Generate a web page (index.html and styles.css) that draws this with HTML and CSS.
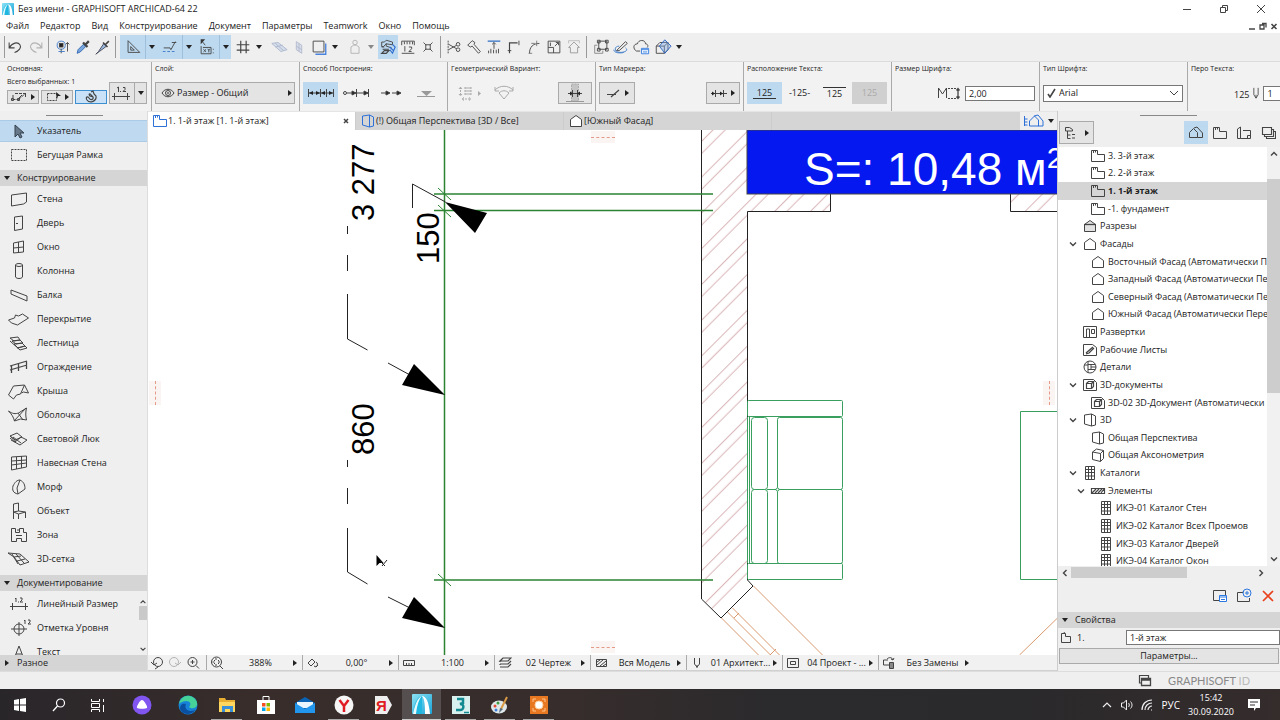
FILE: index.html
```html
<!DOCTYPE html>
<html lang="ru">
<head>
<meta charset="utf-8">
<title>Без имени - GRAPHISOFT ARCHICAD-64 22</title>
<link rel="stylesheet" href="styles.css">
</head>
<body>
<svg class="sprite" aria-hidden="true">
  <linearGradient id="logoFill" x1="0" y1="0" x2="1" y2="1"><stop offset="0" stop-color="#8be4f5"/><stop offset="1" stop-color="#1aa3d8"/></linearGradient>
  <symbol id="logo" viewBox="0 0 20 20"><rect width="20" height="20" rx="1" fill="url(#logoFill)" stroke="none"/><path d="M1 20C2 10 5 3 10 2v18z" fill="#20b8e0" stroke="none"/><path d="M10 2c3 3 3 12 3 18h5C17 8 14 2 10 2z" fill="#fff" stroke="none"/><path d="M10 2c-5 2-7 9-9 18h3c1-9 3-15 6-18z" fill="#e8fbff" stroke="none"/></symbol>
  <symbol id="down" viewBox="0 0 8 8"><path d="M1 2h6L4 6z" fill="currentColor" stroke="none"/></symbol>
  <symbol id="right" viewBox="0 0 8 8"><path d="M2 1v6l4-3z" fill="currentColor" stroke="none"/></symbol>
  <symbol id="chev" viewBox="0 0 10 10"><path d="M2 3.5l3 3 3-3" stroke-width="1.4"/></symbol>
  <symbol id="plan" viewBox="0 0 16 14"><path d="M1.500 1.500h6v4h7v7h-13zM3.500 1.500v2.500M5.500 1.500v2"/></symbol>
  <symbol id="house" viewBox="0 0 16 14"><path d="M2.500 12.500v-7l5.500-4 5.500 4v7z"/></symbol>
  <symbol id="section" viewBox="0 0 16 14"><path d="M2.500 12.500v-7l5.500-4 5.500 4v7z" fill="#e2e2e2"/><path d="M2 5.500h12" stroke-width="1.300"/></symbol>
  <symbol id="interior" viewBox="0 0 16 14"><path d="M1.500 1.500h13v11h-13zM4.500 12v-8h3v8M9.500 4.500h3v4h-3z"/></symbol>
  <symbol id="sheet" viewBox="0 0 16 14"><path d="M1.500 1.500h9l4 3v8h-13z"/><path d="M4 10l7-6M4 11l3-1 5-5" stroke-width="1.300"/></symbol>
  <symbol id="detail" viewBox="0 0 16 14"><circle cx="8" cy="7" r="6"/><path d="M6 1v12M6 4.500h7M6 9.500h7M9 4.500v5M9 7h5M2 5h4"/></symbol>
  <symbol id="doc3d" viewBox="0 0 16 14"><path d="M1.500 1.500h10l3 3v8h-13z"/><path d="M4.500 5.500h5v5h-5zM4.500 5.500l2-2h5l-2 2M11.500 3.500v5l-2 2" stroke-width="1.200"/></symbol>
  <symbol id="persp" viewBox="0 0 16 14"><path d="M2.500 2l7-1v12l-7-2zM9.500 1l4 2v9l-4 1"/></symbol>
  <symbol id="axon" viewBox="0 0 16 14"><path d="M2.500 4l8 1.500v8l-8-2zM2.500 4l4-3 7 1.500-3 3M13.500 2.500v8l-3 3"/></symbol>
  <symbol id="grid" viewBox="0 0 16 14"><path d="M3.500 .500h9v13h-9zM6.500 .500v13M9.500 .500v13M3.500 3.500h9M3.500 6.500h9M3.500 10h9"/></symbol>
  <symbol id="hatch" viewBox="0 0 16 14"><path d="M1.500 4.500h13v5h-13zM2 9l4-4M5 9l4-4M8 9l4-4M11 9l3-4" stroke-width="1.200"/></symbol>
</svg>

<header class="titlebar">
  <svg class="i12"><use href="#logo"/></svg>
  <h1>Без имени - GRAPHISOFT ARCHICAD-64 22</h1>
  <div class="winbtns">
    <button aria-label="Свернуть"><svg class="i12" viewBox="0 0 12 12"><path d="M2 6.500h8"/></svg></button>
    <button aria-label="Восстановить"><svg class="i12" viewBox="0 0 12 12"><path d="M2.500 4.500h5v5h-5zM4.500 4v-1.500h5v5H8"/></svg></button>
    <button aria-label="Закрыть"><svg class="i12" viewBox="0 0 12 12"><path d="M2 2l8 8M10 2l-8 8"/></svg></button>
  </div>
</header>
<nav class="menubar">
  <button>Файл</button><button>Редактор</button><button>Вид</button><button>Конструирование</button><button>Документ</button><button>Параметры</button><button>Teamwork</button><button>Окно</button><button>Помощь</button>
  <div class="docbtns">
    <button aria-label="Свернуть документ"><svg class="i10" viewBox="0 0 10 10"><path d="M2 8h6" stroke-width="1.500"/></svg></button>
    <button aria-label="Восстановить документ"><svg class="i10" viewBox="0 0 10 10"><path d="M2 4h4v4H2zM4 2.500h4v4" stroke-width="1.300"/></svg></button>
    <button aria-label="Закрыть документ"><svg class="i10" viewBox="0 0 10 10"><path d="M2.500 3l5 5M7.500 3l-5 5" stroke-width="1.600"/></svg></button>
  </div>
</nav>

<div class="toolbar">
  <div class="tgroup first">
    <button class="t" aria-label="Отменить"><svg viewBox="0 0 20 20"><path d="M3.500 5v6h6M3.500 11C7 5 13 4 15.500 7.500c2 3-1 7-6 8.500" stroke-width="1.200"/></svg></button>
    <button class="t faint" aria-label="Повторить"><svg viewBox="0 0 20 20"><path d="M16.500 5v6h-6M16.500 11C13 5 7 4 4.500 7.500c-2 3 1 7 6 8.500" stroke-width="1.200"/></svg></button>
  </div>
  <div class="tgroup g2">
    <button class="t" aria-label="Найти и выбрать"><svg viewBox="0 0 20 20"><circle cx="8" cy="8" r="4.500" stroke="#3b78c8"/><rect x="6" y="6" width="4" height="4" fill="#222"/><path d="M8 12v5M15 5v10M13 7l2-2 2 2"/><path d="M5 15h7" stroke="#3b78c8"/></svg></button>
    <button class="t" aria-label="Взять параметры"><svg viewBox="0 0 20 20"><path d="M3.500 17l1-4 6-6 2.500 2.500-6 6z" fill="#79a7de" stroke="#2d64b0"/><path d="M10 5l5 5M12.500 7.500l4-4" stroke-width="2.500"/></svg></button>
    <button class="t" aria-label="Передать параметры"><svg viewBox="0 0 20 20"><path d="M2 18l3-3 6-9 3 3-8 6z" fill="#9abbe4" stroke="#445"/><path d="M10 5l5 5M12.500 7.500l4-4" stroke-width="1.800"/></svg></button>
  </div>
  <div class="tgroup g3">
    <button class="on w25" aria-label="Направляющие"><svg viewBox="0 0 20 20"><path d="M4.500 3v13h13zM7.500 9.500v4h4z"/></svg></button><button class="on w12" aria-label="Меню направляющих"><svg class="i8"><use href="#down"/></svg></button>
    <button class="on w25" aria-label="Привязка"><svg viewBox="0 0 20 20"><path d="M3 11h7l1 2 5-9M12 5h5" /><path d="M2 15h15" stroke="#3b78c8" stroke-dasharray="3 2"/></svg></button><button class="on w12" aria-label="Меню привязки"><svg class="i8"><use href="#down"/></svg></button>
    <button class="on w25" aria-label="Координаты"><svg viewBox="0 0 20 20"><path d="M3 1.500h5L3 7z" fill="#333" stroke="none"/><path d="M4 3l4 5M3.500 9v8.500h11v-7h-9M17 12v1M17 16v1M6 12.500l3 3M9 12.500l-3 3M11 12l1 2v2M13 12l-1 2"/></svg></button><button class="on w12" aria-label="Меню координат"><svg class="i8"><use href="#down"/></svg></button>
  </div>
  <div class="tgroup g4">
    <button class="t" aria-label="Сетка"><svg viewBox="0 0 20 20"><path d="M3 7.500h14M3 13.500h14M7.500 3v14M13.500 3v14" stroke-width="1.300"/></svg></button><button class="w12" aria-label="Меню сетки"><svg class="i8"><use href="#down"/></svg></button>
    <button class="t faint dim2" aria-label="Плоскость"><svg viewBox="0 0 20 20"><path d="M2 6l7-1 10 8-7 2zM6 10l8-2M6 6l9 8" fill="#c5d2e8" stroke="#7f93b8"/></svg></button>
    <button class="t faint dim2" aria-label="Вертикальная плоскость"><svg viewBox="0 0 20 20"><path d="M7 4l6 4v9l-6-4zM10 6v9M7 9l6 4" fill="#c9d2e6" stroke="#8a99ba"/></svg></button>
    <button class="t" aria-label="Слои"><svg viewBox="0 0 20 20"><path d="M17.500 6v12H6" stroke="#4a84e0" stroke-width="1.500"/><path d="M3.500 3.500h12v12h-12z"/></svg></button><button class="w12" aria-label="Меню слоёв"><svg class="i8"><use href="#down"/></svg></button>
    <button class="t faint" aria-label="Гравитация"><svg viewBox="0 0 20 20"><circle cx="10" cy="5" r="2.500"/><path d="M5.500 17v-7l3-2h3l3 2v7z"/></svg></button><button class="w12 grey" aria-label="Меню гравитации"><svg class="i8"><use href="#down"/></svg></button>
    <button class="t on" aria-label="Группы"><svg viewBox="0 0 20 20"><path d="M3 4.500h3l2-2 7 2v3l-7-1-3 3H3zM8 6v3l6 2M3 10h3"/><path d="M15 7l3 3-3 7-3-4M12 10l4 4" stroke="#2a6bd0" stroke-width="1.200"/><path d="M3 17l3-3h5l-3 3zM4 12.500h7" stroke-width="1.300"/></svg></button>
    <button class="t" aria-label="Измерить"><svg viewBox="0 0 20 20"><path d="M3 8V3.500h14V8M6 4v3M9 4v3M12 4v3M15 4v3M3 17h14M6.500 9v6M11 10h3v2l-3 3h3"/></svg></button>
    <button class="t" aria-label="Пересечение"><svg viewBox="0 0 20 20"><path d="M5 5l3 3M15 5l-3 3M5 15l3-3M15 15l-3-3M7.500 7.500h5v5h-5z"/></svg></button>
  </div>
  <div class="tgroup g5">
    <button class="t" aria-label="Разрезать"><svg viewBox="0 0 20 20"><path d="M3.500 3v14" stroke-dasharray="2 1"/><path d="M4 7l9 5M4 13l9-5"/><circle cx="14.500" cy="7" r="2"/><circle cx="14.500" cy="13" r="2"/></svg></button>
    <button class="t" aria-label="Подрезать"><svg viewBox="0 0 20 20"><path d="M3 8l5-5 3 2-1 2 7 8-2 2-7-8-2 1z"/></svg></button>
    <button class="t" aria-label="Подогнать"><svg viewBox="0 0 20 20"><path d="M3 3.500h14" stroke="#3b78c8" stroke-width="1.500"/><path d="M10 5v7M8 7l2-2 2 2M6.500 12v5M9.500 13v4M12.500 13v4M15 12v5M4 14v3"/></svg></button>
    <button class="t" aria-label="Угол"><svg viewBox="0 0 20 20"><path d="M5 17V5.500h9" stroke-width="1.300"/><path d="M3 14h4M15.500 3v5"/></svg></button>
    <button class="t" aria-label="Сопряжение"><svg viewBox="0 0 20 20"><path d="M5 17C5 10 9 6 16 6"/><path d="M4 17h4M13 3v6M7 6h4" stroke="#777"/></svg></button>
    <button class="t" aria-label="Изменить размер"><svg viewBox="0 0 20 20"><path d="M3.500 3.500h13v13h-13zM3.500 10.500h6v6M11 9l4-4M12 5h3v3M6 9V5"/></svg></button>
    <button class="t" aria-label="Крыша"><svg viewBox="0 0 20 20"><path d="M4 10.500l6-6 6 6h-2v6H6v-6z" stroke="#999"/><path d="M4 6V3h12v3" stroke="#bbb"/></svg></button>
  </div>
  <div class="tgroup g6">
    <button class="t" aria-label="Группировать"><svg viewBox="0 0 20 20"><path d="M7.500 3.500h9v9h-9zM6 2.500h3v3H6zM15 2.500h3v3h-3zM6 11.500h3v3H6zM15 11.500h3v3h-3z"/><path d="M3 8v9h9v-3M3 8h3" stroke="#888"/></svg></button>
    <button class="t" aria-label="Редактировать"><svg viewBox="0 0 20 20"><path d="M5 14l10-10 2 2-9 8z"/><path d="M8 9C2 9 2 16 9 16s9-3 6-5M2 13c0 4 8 4 11 3" stroke="#3b78c8"/></svg></button>
    <button class="t" aria-label="Параметры элемента"><svg viewBox="0 0 20 20"><path d="M9 14.500H5c-4-2-4-8 1-8 1-5 9-5 9 0 3 0 3 3 2 4"/><path d="M10.500 11.500h8v6h-8zM11 13h7M12 15.500h5" stroke="#2d78e0" fill="#fff"/></svg></button>
    <button class="t cube" aria-label="3D-вид"><svg viewBox="0 0 20 20"><path d="M2.500 9l4-4h9v8l-4 4h-9zM2.500 9h9v8M11.500 9l4-4"/><path d="M12 2l7 7-7 8-6-8z" fill="#7aa7e8" fill-opacity=".4" stroke="#2d64c0"/></svg></button><button class="w12" aria-label="Меню 3D"><svg class="i8"><use href="#down"/></svg></button>
  </div>
</div>

<div class="infobox">
  <section class="sec s1">
    <p class="lbl">Основная:</p>
    <div class="row">
      <div class="col">
        <p class="lbl">Всего выбранных: 1</p>
        <div class="trio">
          <button class="btn" aria-label="Выбор"><svg class="i20" viewBox="0 0 20 14"><path d="M6 3.500h11M3.500 9.500h6M9.500 9.500l7-6M4 5v4M16.500 4v3" stroke-dasharray="3 1"/><path d="M2.500 8.500h2v2h-2zM8.500 8.500h2v2h-2zM13 5l-3 3"/></svg><svg class="i8"><use href="#right"/></svg></button>
          <button class="btn" aria-label="Рамка"><svg class="i20" viewBox="0 0 20 14"><path d="M4.500 3.500h9v7h-9z" stroke-dasharray="2 1"/><path d="M13 2l5 4-3 0-1 3z" fill="#222" stroke="none"/></svg><svg class="i8"><use href="#right"/></svg></button>
          <button class="btn act" aria-label="Магнит"><svg class="i14" viewBox="0 0 14 14"><path d="M7 2l2-1 1 3 2 2c1 5-6 8-9 4-2-3 1-4 2-2 2 3 5 1 4-1L6 6c-2-2 0-3 1-1l2 2" stroke-width="1.200"/></svg></button>
        </div>
      </div>
      <button class="btn dim" aria-label="Линейный размер"><svg class="i20" viewBox="0 0 20 20"><path d="M1 13.500h18M3.500 10v7M16.500 10v7M6 5l1.500-1v5M9 8.500h1M12 4.500h2v2l-2 2h3"/></svg><span class="ddl"><svg class="i8"><use href="#down"/></svg></span></button>
    </div>
  </section>
  <section class="sec">
    <p class="lbl">Слой:</p>
    <div class="row"><button class="btn layer"><svg class="i14" viewBox="0 0 14 14"><path d="M1 7c3-5 9-5 12 0-3 5-9 5-12 0z"/><circle cx="7" cy="7" r="2.500"/><circle cx="7" cy="7" r=".500"/></svg><span>Размер - Общий</span><svg class="i8"><use href="#right"/></svg></button></div>
  </section>
  <section class="sec">
    <p class="lbl">Способ Построения:</p>
    <div class="row">
      <button class="opt on" aria-label="Цепочка"><svg class="i28" viewBox="0 0 28 20"><path d="M1.500 6v8M26.500 6v8M13.500 6v8M19.500 6v8M2 10h24"/><path d="M2 10l4-2v4zM13 10l-4-2v4zM14 10l4-2v4zM26 10l-4-2v4z" fill="#222" stroke="none"/></svg></button>
      <button class="opt" aria-label="От базы"><svg class="i28" viewBox="0 0 28 20"><circle cx="3" cy="10" r="1.500"/><path d="M5 10h21M14.500 6v8M26.500 6v8"/><path d="M14 10l-4-2v4zM26 10l-4-2v4z" fill="#222"/></svg></button>
      <button class="opt" aria-label="Базовые отметки"><svg class="i28" viewBox="0 0 28 20"><path d="M4 10h8M15 10h8"/><path d="M13 10l-4-2v4zM24 10l-4-2v4z" fill="#222"/></svg></button>
      <button class="opt" aria-label="Высота"><svg class="i28" viewBox="0 0 28 20"><path d="M5 13.500h18" stroke="#999"/><path d="M9 8h11l-5.500 5z" fill="#999" stroke="none"/></svg></button>
    </div>
  </section>
  <section class="sec">
    <p class="lbl">Геометрический Вариант:</p>
    <div class="row spread">
      <button class="opt" aria-label="Направление"><svg class="i28" viewBox="0 0 28 20"><path d="M5.500 4v9M4 6l1.500-2L7 6M4 11l1.500 2L7 11M7 16h9M9 14.500L7 16l2 1.500M14 14.500l2 1.500-2 1.500M9 5h8M9 8h8M9 11h8M11 4v9M15 4v9" stroke="#aaa" stroke-dasharray="2 1"/><path d="M23 8v5l3-2.500z" fill="#aaa" stroke="none"/></svg></button>
      <button class="opt" aria-label="Угловой"><svg class="i20" viewBox="0 0 20 20"><path d="M1 7c5-5 13-5 18 0M5 10c3-3 7-3 10 0l-5 6zM1 4v4h4M19 4v4h-4" stroke="#aaa"/></svg></button>
      <button class="btn push" aria-label="Статический размер"><svg class="i20" viewBox="0 0 20 20"><path d="M6.500 1h7v17h-7z" fill="#c4c4c4" stroke="#aaa" stroke-dasharray="2 1"/><path d="M3 10.500h14M7.500 7v7M12.500 7v7"/><path d="M1 18.500h18" stroke="#999"/><path d="M5 8.500l3 2-3 2zM15 8.500l-3 2 3 2z" fill="#222" stroke="none"/></svg></button>
    </div>
  </section>
  <section class="sec">
    <p class="lbl">Тип Маркера:</p>
    <div class="row spread">
      <button class="btn" aria-label="Маркер"><svg class="i20" viewBox="0 0 20 20"><path d="M4 11.500h9M8 14l8-7" stroke-width="1.200"/></svg><svg class="i8"><use href="#right"/></svg></button>
      <button class="btn push" aria-label="Линия"><svg class="i20" viewBox="0 0 20 20"><path d="M2 10.500h16M6.500 7v7M14.500 7v7"/><path d="M6 10.500l-3-2v4zM14 10.500l-3-2v4z" fill="#222" stroke="none"/></svg><svg class="i8"><use href="#right"/></svg></button>
    </div>
  </section>
  <section class="sec">
    <p class="lbl">Расположение Текста:</p>
    <div class="row num"><button class="opt on"><span class="over">125</span></button><button class="opt">-125-</button><button class="opt"><span class="under">125</span></button><button class="opt dis" disabled>125</button></div>
  </section>
  <section class="sec">
    <p class="lbl">Размер Шрифта:</p>
    <div class="row size"><svg class="i24" viewBox="0 0 24 20"><path d="M1.500 15V5l4 6 4-6v10"/><path d="M11 5.500h8M11 15.500h8" stroke-dasharray="2 1"/><path d="M21 6v9M19.500 7.500L21 5.500l1.500 2M19.500 13.500l1.500 2 1.500-2" stroke-width="1.300"/></svg><input class="field" type="text" value="2,00" aria-label="Размер шрифта"></div>
  </section>
  <section class="sec">
    <p class="lbl">Тип Шрифта:</p>
    <div class="row"><div class="selwrap"><svg class="i10" viewBox="0 0 10 10"><path d="M1 6l2 3 5-8" stroke-width="1.600"/></svg><select aria-label="Тип шрифта"><option>Arial</option></select><svg class="i10 thinchev" viewBox="0 0 10 10"><path d="M1 3l4 4 4-4"/></svg></div></div>
  </section>
  <section class="sec last">
    <p class="lbl">Перо Текста:</p>
    <div class="row pen"><span class="pennum">125</span><svg class="i12" viewBox="0 0 12 14"><path d="M3.500 1v8l2.500 4 2.500-4V1M6 9v4"/></svg><input class="field" type="text" value="1" aria-label="Перо текста"></div>
  </section>
</div>

<main class="work">
  <aside class="toolbox">
    <div class="grip"></div>
    <button class="tool sel"><svg viewBox="0 0 24 20"><path d="M8 4v12l3-3 2 4 2-1-2-4h4z" fill="#66788a" stroke="#35404c"/></svg>Указатель</button>
    <button class="tool gap"><svg viewBox="0 0 24 20"><path d="M4.500 4.500h15v11h-15z" stroke-dasharray="2 1"/></svg>Бегущая Рамка</button>
    <button class="head"><svg class="i8"><use href="#down"/></svg>Конструирование</button>
    <div class="tools">
      <button class="tool"><svg viewBox="0 0 24 20"><path d="M4.500 6l15-2v9l-3 2-12 2z"/></svg>Стена</button>
      <button class="tool"><svg viewBox="0 0 24 20"><path d="M7.500 4l8-1v13l-8 1.500zM9 10.500h2"/></svg>Дверь</button>
      <button class="tool"><svg viewBox="0 0 24 20"><path d="M6.500 6l10-2v11l-10 1zM11.500 5v11M6.500 11l10-1"/></svg>Окно</button>
      <button class="tool"><svg viewBox="0 0 24 20"><ellipse cx="12" cy="4" rx="3.500" ry="1.500"/><path d="M8.500 4v12c1 2 6 2 7 0V4"/></svg>Колонна</button>
      <button class="tool"><svg viewBox="0 0 24 20"><path d="M4 5l16 6v5L4 9z"/></svg>Балка</button>
      <button class="tool"><svg viewBox="0 0 24 20"><path d="M1.500 11l6-2 1-3 3 1 4-2 6 4-11 7-6-2z"/></svg>Перекрытие</button>
      <button class="tool"><svg viewBox="0 0 24 20"><path d="M3 5l8-1 2 3-6 1zM5 8l8-1 3 3-7 1zM7 11l8-1 3 3-7 2zM10 15l8-2 2 2-7 2-10-9"/></svg>Лестница</button>
      <button class="tool"><svg viewBox="0 0 24 20"><path d="M3 9l17-5M3 13l17-5M4.500 9v7M11.500 7v7M19.500 4v8" stroke-width="1.300"/></svg>Ограждение</button>
      <button class="tool"><svg viewBox="0 0 24 20"><path d="M1.500 14l5-9 11-1-4 9-4 1-3 4zM17.500 4l4 8-5-1-2 1"/></svg>Крыша</button>
      <button class="tool"><svg viewBox="0 0 24 20"><path d="M1.500 6c4 3 7 3 10 2l8-5c-1 4-1 8 0 12l-6-1-6 2c-1-4-3-7-6-10zM19 3l-12 13M11 8l5 7"/></svg>Оболочка</button>
      <button class="tool"><svg viewBox="0 0 24 20"><path d="M3 7l7-3 5 4-7 3zM3 7l5 4v2l-5-4M8 13l6-5 6 3-7 5-9-5M6 8l8 6"/></svg>Световой Люк</button>
      <button class="tool"><svg viewBox="0 0 24 20"><path d="M4.500 4l15-1v11l-15 3zM9.500 4v12M14.500 3v12M4.500 8l15-1M4.500 12l15-2"/></svg>Навесная Стена</button>
      <button class="tool"><svg viewBox="0 0 24 20"><path d="M11 17c-5-1-6-4-5-8 2-4 4-6 7-6l-3 8zM13 3c4 2 5 5 5 9l-7 5"/></svg>Морф</button>
      <button class="tool"><svg viewBox="0 0 24 20"><path d="M6.500 3l5-1v8l-5 1zM6.500 11l5 2 7-2-7-1M6.500 11v7M11.500 13v5M18.500 11v6"/></svg>Объект</button>
      <button class="tool"><svg viewBox="0 0 24 20"><path d="M4.500 3.500h4v4h4v-4h4v4h3v9h-5v-3h-5v3h-5zM9 10.500h6M10 5h2"/></svg>Зона</button>
      <button class="tool"><svg viewBox="0 0 24 20"><path d="M1 4l12 1 9 8-9 3-6-8zM5 5l6 10M9 5l8 9M7 8l7-1M10 12l8-2"/></svg>3D-сетка</button>
    </div>
    <button class="head"><svg class="i8"><use href="#down"/></svg>Документирование</button>
    <div class="docs">
      <div class="doclist">
        <button class="tool"><svg viewBox="0 0 24 20"><path d="M3 12.500h18M5.500 9v7M18.500 9v7M8 5l1-1v4M11 8h1M13 4h2v2l-2 2h3"/></svg>Линейный Размер</button>
        <button class="tool"><svg viewBox="0 0 24 20"><circle cx="12" cy="11" r="5"/><path d="M4 11h16M12 4v14M17 3l1-1v4M21 2h2v2l-2 2h3"/></svg>Отметка Уровня</button>
        <button class="tool"><svg viewBox="0 0 24 20"><path d="M7 17l5-13 5 13M9 12h6"/></svg>Текст</button>
      </div>
      <div class="vbar"><svg class="i8 up"><use href="#chev"/></svg><i></i><svg class="i8"><use href="#chev"/></svg></div>
    </div>
    <button class="head"><svg class="i8"><use href="#right"/></svg>Разное</button>
  </aside>

  <section class="center">
    <div class="tabs">
      <button class="tab cur"><svg class="i16 blue"><use href="#plan"/></svg>1. 1-й этаж [1. 1-й этаж]<svg class="i10 x" viewBox="0 0 10 10"><path d="M3 3l4 4M7 3l-4 4" stroke-width="1.500"/></svg></button>
      <button class="tab"><svg class="i16 blue"><use href="#persp"/></svg>(!) Общая Перспектива [3D / Все]</button>
      <button class="tab"><svg class="i16 white"><use href="#house"/></svg>[Южный Фасад]</button>
      <button class="navbtn" aria-label="Навигатор"><svg class="i24 blue" viewBox="0 0 24 14"><path d="M2.500 2v10M2.500 5h3M2.500 8h3M2.500 11h3M7.500 12V7l5-5 4 4v6zM12 2l4-1 5 6v5h-5"/></svg><svg class="i8"><use href="#down"/></svg></button>
    </div>
    <div class="canvas">
      <svg class="drawing">
        <defs><pattern id="brick" width="25.3" height="10" patternUnits="userSpaceOnUse" patternTransform="rotate(45)"><path d="M14.200 0v10M22.700 0v10" stroke="#cfa0a4" stroke-width=".8"/></pattern></defs>
        <g transform="translate(-148 -130)">
          <path d="M702 130h45v64h84v17h-84v369l6 6-32 32-19-19z" fill="url(#brick)" stroke="none"/>
          <path d="M1010 194h500v17h-500z" fill="url(#brick)" stroke="none"/>
          <path class="ink" d="M701.500 130v469l19.500 19 32-32-5.500-6V211.500h83V193.500h-83V130M1500 211.500h-489.500v-18h489.500"/>
          <rect x="747" y="130" width="753" height="64" fill="#0518f0"/>
          <text class="area" x="804" y="185">S=: 10,48 м<tspan class="sup" dy="-17">2</tspan></text>
          <g class="dim-green"><path d="M444.500 130v525M434 194h279M434 210.500h279M434 580h279"/><path class="thin" d="M438 188l13 12M438 205l13 12M438 574l13 12"/></g>
          <g class="ink"><path d="M347.500 226v8M347.500 255v16M347.500 294v45l20 11M388 363l22 12M347.500 460v7M347.500 488v16M347.500 528v44l20 12M388 597l22 11M412.500 208v-24l33 18"/></g>
          <path d="M445 395l-31-31-12 21zM445 628l-31-31-12 21zM445 202l42 11-12 20z" fill="#000" stroke="none"/>
          <g class="dimtext"><text transform="translate(374 221) rotate(-90)">3 277</text><text transform="translate(439 264) rotate(-90)">150</text><text transform="translate(374 455) rotate(-90)">860</text></g>
          <g class="sofa"><rect x="747.500" y="400.500" width="95" height="16" rx="1"/><rect x="747.500" y="563.500" width="95" height="16" rx="1"/><path d="M749.500 417v146M747.500 417v146"/><rect x="751.500" y="417.500" width="16" height="72" rx="3"/><rect x="751.500" y="489.500" width="16" height="74" rx="3"/><path d="M767 489.500h11"/><rect x="777.500" y="417.500" width="65" height="72" rx="2"/><rect x="777.500" y="489.500" width="65" height="74" rx="2"/><circle cx="777.500" cy="489.500" r="1.500" fill="#fff"/><path d="M1500 411.500h-479.500v168h479.500"/></g>
          <g class="orange"><path d="M753.500 586l69 69"/><path d="M721.500 618l37 37"/><path d="M727.500 612l43 43"/><path d="M732.500 608l47 47"/><path d="M734 618l5-5"/><path d="M770 655l6-6"/><path d="M1057.500 618l-38 37"/></g>
          <path d="M376.500 555v11l3-3 4 0z" fill="#000" stroke="none"/><path d="M380 561l5 5M387 560l-5 6" class="ink"/>
        </g>
      </svg>
      <i class="mark h top"></i><i class="mark h bottom"></i><i class="mark v left"></i><i class="mark v rightm"></i>
    </div>
    <div class="status">
      <div class="zooms">
        <button aria-label="Назад"><svg class="i14" viewBox="0 0 14 14"><circle cx="8" cy="6" r="4.500"/><path d="M1 6l3 3 3-2M8 11l-3 2"/></svg></button>
        <button class="faint" aria-label="Вперёд"><svg class="i14" viewBox="0 0 14 14"><circle cx="6" cy="6" r="4.500"/><path d="M13 6l-3 3-3-2"/></svg></button>
        <button aria-label="Увеличить"><svg class="i14" viewBox="0 0 14 14"><circle cx="6.500" cy="6" r="4.500"/><path d="M10 9.500l3 3M4.500 6h4M6.500 4v4"/></svg></button>
      </div>
      <button class="st"><svg class="i14" viewBox="0 0 14 14"><circle cx="6.500" cy="6" r="5"/><path d="M10 10l3 3M4 4l1 1M9 4L8 5M4 8l1-1M9 8L8 7M6 2v2M6 8v2M2.500 6h2M8 6h2"/></svg><span>388%</span><svg class="i8"><use href="#right"/></svg></button>
      <button class="st"><svg class="i14" viewBox="0 0 14 14"><path d="M2 7l4-4 3 3-4 4zM10 6c2 1 2 3 0 5M8 10l2 1 2-2"/></svg><span>0,00°</span><svg class="i8"><use href="#right"/></svg></button>
      <button class="st"><svg class="i14" viewBox="0 0 14 14"><path d="M1.500 4.500h11v5h-11zM4.500 7v2.500M7 7v2.500M9.500 7v2.500"/></svg><span>1:100</span><svg class="i8"><use href="#right"/></svg></button>
      <button class="st"><svg class="i14" viewBox="0 0 14 14"><path d="M2 5l3-3h8l-3 3zM2 8h8l3-3M2 11h8l3-3M2 5v1M2 8v1" stroke-width="1.200"/></svg><span>02 Чертеж</span><svg class="i8"><use href="#right"/></svg></button>
      <button class="st"><svg class="i14" viewBox="0 0 14 14"><path d="M2.500 3.500h10v7h-10zM3 6l3-2M3 9l6-5M6 10l6-5M9 10l3-2"/></svg><span>Вся Модель</span><svg class="i8"><use href="#right"/></svg></button>
      <button class="st"><svg class="i14" viewBox="0 0 14 14"><path d="M4.500 2v6l2.500 3 2.500-3V2M7 9v3"/></svg><span>01 Архитект...</span><svg class="i8"><use href="#right"/></svg></button>
      <button class="st"><svg class="i14" viewBox="0 0 14 14"><path d="M1.500 2.500h11v9h-11zM4.500 5.500h5v3h-5z"/></svg><span>04 Проект - ...</span><svg class="i8"><use href="#right"/></svg></button>
      <button class="st"><svg class="i14" viewBox="0 0 14 14"><path d="M7 9H1.500V4H6M5 3c2-2 5-2 6 1M9 3l2 1 1-2"/><path d="M7.500 6.500h4v6h-4z" fill="#888"/></svg><span>Без Замены</span><svg class="i8"><use href="#right"/></svg></button>
    </div>
  </section>

  <aside class="navigator">
    <div class="grip"></div>
    <div class="navtop">
      <button class="btn" aria-label="Проект"><svg class="i16" viewBox="0 0 16 14"><path d="M3.500 5V1.500h4l3 2V5zM5.500 5v7.500h3M5.500 9h3M10 8.500h3M10 12h3"/></svg><svg class="i8"><use href="#right"/></svg></button>
      <span class="fill"></span>
      <button class="nb on" aria-label="Карта проекта"><svg class="i16" viewBox="0 0 16 14"><path d="M1.500 11.500v-5l4-4 4 4v5zM6 2l3-1 5.500 6v4.500h-5"/></svg></button>
      <button class="nb" aria-label="Карта видов"><svg class="i16"><use href="#plan"/></svg></button>
      <button class="nb" aria-label="Книга макетов"><svg class="i16" viewBox="0 0 16 14"><path d="M4.500 12.500h-3V3l3-2v11.500h10v-8H7M14.500 9.500h-3v3"/></svg></button>
      <button class="nb" aria-label="Наборы"><svg class="i16" viewBox="0 0 16 14"><path d="M2.500 1.500h9v7h-9zM4.500 9v1.500h9v-7H12M6.500 11v1.500h9v-7H14" stroke-width="1.100"/></svg></button>
    </div>
    <div class="treewrap">
      <ul class="tree">
        <li class="l3"><svg><use href="#plan"/></svg>3. 3-й этаж</li>
        <li class="l3"><svg><use href="#plan"/></svg>2. 2-й этаж</li>
        <li class="l3 cur"><svg><use href="#plan"/></svg>1. 1-й этаж</li>
        <li class="l3"><svg><use href="#plan"/></svg>-1. фундамент</li>
        <li class="l2"><svg><use href="#section"/></svg>Разрезы</li>
        <li class="l2 open"><svg class="c"><use href="#chev"/></svg><svg><use href="#house"/></svg>Фасады</li>
        <li class="l3"><svg><use href="#house"/></svg>Восточный Фасад (Автоматически Пе</li>
        <li class="l3"><svg><use href="#house"/></svg>Западный Фасад (Автоматически Пер</li>
        <li class="l3"><svg><use href="#house"/></svg>Северный Фасад (Автоматически Пер</li>
        <li class="l3"><svg><use href="#house"/></svg>Южный Фасад (Автоматически Перес</li>
        <li class="l2"><svg><use href="#interior"/></svg>Развертки</li>
        <li class="l2"><svg><use href="#sheet"/></svg>Рабочие Листы</li>
        <li class="l2"><svg><use href="#detail"/></svg>Детали</li>
        <li class="l2 open"><svg class="c"><use href="#chev"/></svg><svg><use href="#doc3d"/></svg>3D-документы</li>
        <li class="l3"><svg><use href="#doc3d"/></svg>3D-02 3D-Документ (Автоматически П</li>
        <li class="l2 open"><svg class="c"><use href="#chev"/></svg><svg><use href="#persp"/></svg>3D</li>
        <li class="l3"><svg><use href="#persp"/></svg>Общая Перспектива</li>
        <li class="l3"><svg><use href="#axon"/></svg>Общая Аксонометрия</li>
        <li class="l2 open"><svg class="c"><use href="#chev"/></svg><svg><use href="#grid"/></svg>Каталоги</li>
        <li class="l3 open"><svg class="c"><use href="#chev"/></svg><svg><use href="#hatch"/></svg>Элементы</li>
        <li class="l4"><svg><use href="#grid"/></svg>ИКЭ-01 Каталог Стен</li>
        <li class="l4"><svg><use href="#grid"/></svg>ИКЭ-02 Каталог Всех Проемов</li>
        <li class="l4"><svg><use href="#grid"/></svg>ИКЭ-03 Каталог Дверей</li>
        <li class="l4"><svg><use href="#grid"/></svg>ИКЭ-04 Каталог Окон</li>
      </ul>
      <div class="tbar"><svg class="i10 up"><use href="#chev"/></svg><i></i><svg class="i10"><use href="#chev"/></svg></div>
    </div>
    <div class="hbar"><svg class="i10 lft"><use href="#chev"/></svg><i></i><svg class="i10 rgt"><use href="#chev"/></svg></div>
    <div class="actions">
      <button aria-label="Параметры вида"><svg class="i16" viewBox="0 0 16 16"><path d="M7 12.500H1.500v-10h12V7"/><path d="M7.500 7.500h7v6h-7zM8 9h6M9 11.500h4" stroke="#2d78e0" fill="#fff"/></svg></button>
      <button aria-label="Новый"><svg class="i16" viewBox="0 0 16 16"><path d="M7 3.500v1H1.500v9h12V10"/><circle cx="11" cy="5" r="4" stroke="#2d78e0"/><path d="M9 5h4M11 3v4" stroke="#2d78e0"/></svg></button>
      <button aria-label="Удалить"><svg class="i16" viewBox="0 0 16 16"><path d="M3 3l10 10M13 3L3 13" stroke="#e8401c" stroke-width="1.700"/></svg></button>
    </div>
    <button class="head"><svg class="i8"><use href="#down"/></svg>Свойства</button>
    <div class="prop"><svg class="i14" viewBox="0 0 14 14"><path d="M2.500 11.500v-9h4v3h5v6zM4 2.500l2-1"/></svg><label for="floor">1.</label><input id="floor" class="field" type="text" value="1-й этаж"></div>
    <button class="btn params">Параметры...</button>
  </aside>
</main>

<div class="idbar"><svg class="i14" viewBox="0 0 14 14"><path d="M4 9H1.500V1.500h9V4" stroke-width="1.200"/><path d="M3.500 4.500h9v7h-9zM3.500 6h9" stroke-width="1.300"/></svg><span class="brand">GRAPHISOFT <span>ID</span></span></div>

<footer class="taskbar">
  <button aria-label="Пуск"><svg viewBox="0 0 20 20"><path d="M4 5l5-1v5.500H4zM10 4l6-1v6.500h-6zM4 10.500h5V16l-5-1zM10 10.500h6V17l-6-1z" fill="#fff" stroke="none"/></svg></button>
  <button aria-label="Поиск"><svg viewBox="0 0 20 20"><circle cx="11.500" cy="8" r="4" stroke="#fff" stroke-width="1.200"/><path d="M8.500 11L4 16" stroke="#fff" stroke-width="1.300"/></svg></button>
  <button aria-label="Представление задач"><svg viewBox="0 0 20 20"><path d="M3.500 4v2.500h8V4M3.500 8.500h8v4h-8zM3.500 17v-2.500h8V17M15.500 4v3M15.500 10v7" stroke="#fff"/></svg></button>
  <button class="al" aria-label="Алиса"><svg viewBox="0 0 20 20"><circle cx="10" cy="10" r="9.500" fill="#8055f0" stroke="none"/><path d="M10 5c2 0 6 7 5 8s-9 1-10 0 3-8 5-8z" fill="#fff" stroke="none"/></svg></button>
  <button class="ed" aria-label="Edge"><svg viewBox="0 0 20 20"><circle cx="10" cy="10" r="9.500" fill="#1683d8" stroke="none"/><path d="M1 9C2 3 7 0 12 1s8 6 7 9c-1 4-6 4-8 2 3-3 1-6-3-6S1 9 1 9z" fill="#45d39a" stroke="none"/><path d="M8 9c-2 4 1 9 9 6-3 5-12 6-15-1 0-5 3-6 6-5z" fill="#0b4fa0" stroke="none"/></svg></button>
  <button class="run" aria-label="Проводник"><svg viewBox="0 0 20 20"><path d="M2 3h6l1 2h9v12H2z" fill="#e8ae32" stroke="none"/><path d="M2 7h16v10H2z" fill="#ffd75e" stroke="none"/><path d="M5 17v-6h11v6h-3v-3H8v3z" fill="#398fd8" stroke="none"/></svg></button>
  <button aria-label="Store"><svg viewBox="0 0 20 20"><path d="M7 5V1.500h6V5" stroke="#fff"/><path d="M1 5h18v14H1z" fill="#fff" stroke="none"/><path d="M6 8h3.500v3.500H6z" fill="#f25022" stroke="none"/><path d="M10.500 8H14v3.500h-3.500z" fill="#7fba00" stroke="none"/><path d="M6 12.500h3.500V16H6z" fill="#00a4ef" stroke="none"/><path d="M10.500 12.500H14V16h-3.500z" fill="#ffb900" stroke="none"/></svg></button>
  <button aria-label="Почта"><svg viewBox="0 0 20 20"><path d="M0 8l10-6 10 6v10H0z" fill="#0a63b5" stroke="none"/><path d="M2 7h16v6H2z" fill="#e9f5ff" stroke="none"/><path d="M0 8l10 6L20 8v10H0z" fill="#2196ec" stroke="none"/></svg></button>
  <button class="run" aria-label="Яндекс Браузер"><svg viewBox="0 0 20 20"><circle cx="10" cy="10" r="9.500" fill="#f6f6f6" stroke="none"/><path d="M5.500 5L10 11l4.500-6M10 11v6" stroke="#e01b24" stroke-width="2.500"/></svg></button>
  <button aria-label="Яндекс"><svg viewBox="0 0 20 20"><path d="M2 1h12l5 9-5 9H2z" fill="#eee" stroke="none"/><text x="3" y="16" fill="#e01b24" class="ya">Я</text></svg></button>
  <button class="run cur" aria-label="ArchiCAD"><svg><use href="#logo"/></svg></button>
  <button class="run" aria-label="3ds Max"><svg viewBox="0 0 20 20"><rect x="1" y="1" width="18" height="18" fill="#d8f0ee" stroke="none"/><path d="M6 4h6v4l-3 1c5 0 4 6 0 6H5" stroke="#128a91" stroke-width="2.500"/><path d="M13 17.500h5" stroke="#128a91" stroke-width="1.500"/></svg></button>
  <button class="run" aria-label="Paint"><svg viewBox="0 0 20 20"><ellipse cx="9" cy="12" rx="8" ry="6.500" fill="#dfe7ea" stroke="none"/><circle cx="5" cy="11" r="1.500" fill="#e24a35" stroke="none"/><circle cx="8" cy="8" r="1.500" fill="#3f9d44" stroke="none"/><circle cx="6" cy="15" r="1.500" fill="#3c7fd6" stroke="none"/><path d="M11 14l6-12" stroke="#d99b45" stroke-width="2"/><path d="M9 18l1-5 3 1z" fill="#526b7a" stroke="none"/></svg></button>
  <button class="run" aria-label="Запись экрана"><svg viewBox="0 0 20 20"><rect x="1" y="1" width="18" height="18" fill="#e87722" stroke="none"/><circle cx="10" cy="10" r="4" fill="#fff" stroke="#ffd0a0"/><path d="M4 7V4h3M13 4h3v3M16 13v3h-3M7 16H4v-3" stroke="#ffc38a"/></svg></button>
  <div class="tray">
    <svg class="i14" viewBox="0 0 14 14"><path d="M3 9l4-4 4 4" stroke-width="1.200"/></svg>
    <svg class="i14" viewBox="0 0 14 14"><path d="M1.500 5h2l3-3v10l-3-3h-2zM8.500 5c1 1 1 3 0 4M10.500 3.500c2 2 2 5 0 7"/></svg>
    <svg class="i14" viewBox="0 0 14 14"><path d="M2 12C2 6 6 2 12 2M5 12c0-4 3-7 7-7M8 12c0-2 2-4 4-4M11 12h1" stroke-width="1.200"/></svg>
    <span class="lang">РУС</span>
    <time class="clock">15:42<br>30.09.2020</time>
    <svg class="i14" viewBox="0 0 14 14"><path d="M1 1h12v9H9l-2 3v-3H1z" fill="#fff" stroke="none"/><path d="M3 4h8M3 7h5" stroke="#332c2c"/></svg>
  </div>
</footer>
</body>
</html>
```
FILE: styles.css
```css
* { box-sizing: border-box; }
body {
  margin: 0; height: 100vh; display: flex; flex-direction: column; overflow: hidden;
  font: 9px/12px "Open Sans", "Noto Sans", sans-serif; color: #222; background: #efefef;
}
button { font: inherit; color: inherit; border: 0; padding: 0; background: none; display: flex; align-items: center; justify-content: center; white-space: nowrap; }
p, h1, ul { margin: 0; padding: 0; font: inherit; }
svg { fill: none; stroke: #444; flex: none; display: block; }
.sprite { position: absolute; width: 0; height: 0; }
.i8 { width: 8px; height: 8px; }
.i10 { width: 10px; height: 10px; }
.i12 { width: 12px; height: 12px; }
.i14 { width: 14px; height: 14px; }
.i16 { width: 16px; height: 14px; }
.i20 { width: 20px; height: 20px; }
.i24 { width: 24px; height: 20px; }
.i28 { width: 28px; height: 20px; }
.up { transform: rotate(180deg); }
.lft { transform: rotate(90deg); }
.rgt { transform: rotate(-90deg); }
.on { background: #bdd9f0; }
.faint { opacity: .35; }
.faint.dim2 { opacity: .6; }
.grey { color: #888; }
.blue { stroke: #2d70d8; }
.white { fill: #fff; }

.titlebar { height: 18px; flex: none; background: #fff; display: flex; align-items: center; padding-left: 2px; gap: 4px; }
.winbtns { margin-left: auto; display: flex; gap: 25px; padding-right: 13px; }
.menubar { height: 15px; flex: none; background: #fff; display: flex; align-items: center; padding-left: 6px; gap: 11px; }
.docbtns { margin-left: auto; display: flex; gap: 1px; padding-right: 1px; }

.toolbar { height: 29px; flex: none; display: flex; align-items: center; padding-left: 4px; border-bottom: 1px solid #dcdcdc; }
.tgroup { display: flex; align-items: center; height: 22px; }
.tgroup + .tgroup { border-left: 1px solid #999; margin-left: 2px; padding-left: 4px; }
.tgroup.first { border-left: 1px solid #999; gap: 1px; }
.tgroup + .tgroup.g4 { border: 0; margin-left: 0; padding-left: 2px; }
.tgroup + .tgroup.g5 { padding-left: 3px; }
.t { width: 20px; height: 20px; }
.t svg, .w25 svg { width: 18px; height: 18px; }
.w25 { width: 25px; height: 24px; }
.w12 { width: 12px; height: 24px; }
.on.w12 { border-left: 1px solid #9fc0dc; }
.g4 .w12 { margin-right: 4px; }
.g4 .w12.grey { margin-right: 1px; }
.g4 .t { height: 24px; }
.cube { margin-left: 2px; }

.infobox { height: 49px; flex: none; display: flex; background: #f2f2f2; overflow: hidden; }
.sec { width: 148px; flex: none; padding: 1px 3px 0; border-right: 1px solid #aaa; }
.sec.s1 { width: 152px; padding-left: 7px; }
.sec.last { flex: 1; border: 0; min-width: 92px; padding-right: 0; }
.lbl { font-size: 7px; line-height: 12px; height: 12px; white-space: nowrap; }
.row { display: flex; height: 22px; align-items: center; margin-top: 7px; }
.s1 .row { margin-top: 1px; height: 28px; gap: 2px; align-items: flex-end; }
.trio { display: flex; gap: 2px; margin-top: 2px; }
.btn { border: 1px solid #aaa; background: #e4e4e4; height: 22px; padding: 0 3px; }
.trio .btn { height: 14px; width: 32px; padding: 0; }
.trio .i20 { height: 14px; }
.trio .btn.act { border: 1px solid #3d8fd0; background: #c9e2f7; }
.btn.dim { width: 38px; padding: 0; height: 22px; }
.ddl { border-left: 1px solid #aaa; height: 20px; display: flex; align-items: center; padding-left: 2px; margin-left: 3px; }
.layer { width: 140px; justify-content: flex-start; gap: 2px; padding: 0 0 0 5px; }
.layer .i8 { margin-left: auto; }
.opt { width: 35px; height: 22px; }
.push { margin-left: auto; width: 34px; }
.over { border-bottom: 1px solid #333; padding: 0 4px; line-height: 11px; }
.under { border-top: 1px solid #333; padding: 0 4px; line-height: 11px; }
.dis { background: #d0d0d0; color: #aaa; }
.field { font: inherit; height: 15px; border: 1px solid #777; background: #fff; padding: 0 3px; min-width: 0; color: #222; border-radius: 0; }
.size { padding-left: 42px; gap: 4px; }
.size .field { width: 70px; }
.selwrap { display: flex; align-items: center; width: 140px; height: 17px; border: 1px solid #777; background: #fff; padding: 0 3px; }
.selwrap select { flex: 1; font: inherit; appearance: none; border: 0; background: none; padding: 0 2px; color: #222; }
.pen { padding-left: 43px; gap: 1px; }
.pen .field { flex: 1; border-right: 0; }
.pennum { line-height: 12px; padding-top: 4px; }

.work { flex: 1; min-height: 0; display: flex; }
.grip { height: 1px; width: 57px; background: #888; flex: none; }
.head { height: 16px; flex: none; width: 100%; background: #d5d5d5; justify-content: flex-start; gap: 6px; padding-left: 3px; }
.toolbox { width: 148px; flex: none; display: flex; flex-direction: column; border-right: 1px solid #ddd; }
.toolbox > .grip { margin: 4px 0 3px 46px; }
.tool { width: 100%; height: 24px; flex: none; justify-content: flex-start; padding-left: 7px; gap: 6px; }
.tool svg { width: 24px; height: 20px; }
.tool.sel { background: #bfdaf0; border: 1px solid #a9cbe6; border-width: 1px 0; }
.tool.gap { margin-bottom: 3px; }
.toolbox > .tool.sel { height: 22px; margin: 1px 0; }
.tools { margin: 1px 0 4px; }
.docs { flex: 1; min-height: 0; display: flex; padding-top: 1px; }
.doclist { flex: 1; overflow: hidden; min-height: 0; }
.vbar { width: 8px; display: flex; flex-direction: column; padding: 6px 0 2px; }
.vbar i { height: 14px; background: #c9c9c9; margin-bottom: auto; }

.center { flex: 1; min-width: 0; display: flex; flex-direction: column; }
.tabs { height: 19px; flex: none; display: flex; background: #d5d5d5; border-top: 1px solid #e5e5e5; }
.tab { width: 208px; justify-content: flex-start; padding: 0 4px; gap: 0; border-right: 1px solid #ccc; }
.tab.cur { background: #fff; }
.x { margin-left: auto; }
.navbtn { margin-left: auto; background: #efefef; padding: 0 2px; gap: 1px; }
.navbtn .i24 { height: 14px; }
.canvas { flex: 1; min-height: 0; position: relative; background: #fff; overflow: hidden; }
.drawing { width: 100%; height: 100%; }
.ink { stroke: #222; stroke-width: 1; }
.area { font: 46px "Liberation Sans", Arial, sans-serif; fill: #fff; stroke: none; }
.sup { font-size: 30px; }
.dimtext { font: 31px "Liberation Sans", Arial, sans-serif; fill: #000; stroke: none; }
.dim-green { stroke: #2c8433; stroke-width: 1.5; }
.thin { stroke-width: 1; }
.sofa { stroke: #3a9f5e; }
.orange { stroke: #d99a70; }
.mark { position: absolute; background: #faf4f2; }
.mark.h { width: 24px; height: 12px; left: 50%; margin-left: -12px; }
.mark.v { width: 12px; height: 24px; top: 50%; margin-top: -12px; }
.mark.h::after { content: ""; position: absolute; inset: 6px 0 auto; border-top: 1px dashed #e59a88; }
.mark.v::after { content: ""; position: absolute; inset: 0 auto 0 6px; border-left: 1px dashed #e59a88; }
.top { top: 1px; }
.bottom { bottom: 2px; }
.left { left: 1px; }
.rightm { right: 2px; }
.status { height: 16px; flex: none; display: flex; border-bottom: 1px solid #d0d0d0; background: #f1f1f1; }
.zooms { width: 58px; display: flex; gap: 4px; padding-left: 2px; }
.st { width: 96px; flex: none; border-left: 1px solid #aaa; padding: 0 3px; }
.st span { flex: 1; text-align: center; padding-left: 6px; }

.navigator { width: 223px; flex: none; display: flex; flex-direction: column; border-left: 1px solid #ccc; }
.navigator > .grip { margin: 4px 0 4px 82px; }
.navtop { height: 27px; flex: none; display: flex; align-items: flex-start; padding-top: 1px; }
.navtop > .btn { width: 35px; height: 23px; gap: 5px; margin-left: 1px; }
.fill { flex: 1; }
.nb { width: 24px; height: 23px; }
.treewrap { flex: 1; min-height: 0; overflow: hidden; display: flex; background: #fff; }
.tree { flex: 1; min-width: 0; height: 423px; list-style: none; display: grid; grid-auto-rows: 1fr; }
.tree li { display: flex; align-items: center; gap: 2px; white-space: nowrap; overflow: hidden; }
.tree svg { width: 16px; height: 14px; }
.tree svg.c { width: 10px; height: 10px; margin-left: -14px; margin-right: 2px; }
.l2 { padding-left: 24px; }
.l3 { padding-left: 32px; }
.l4 { padding-left: 40px; }
.tree .cur { background: #d5d5d5; font-weight: 700; }
.tbar { width: 13px; display: flex; flex-direction: column; align-items: center; background: #f1f1f1; padding: 2px 0; }
.tbar i { width: 13px; height: 214px; margin: 20px 0 auto; background: #cdcdcd; }
.hbar { height: 13px; flex: none; display: flex; align-items: center; padding: 0 14px 0 2px; }
.hbar i { width: 116px; height: 11px; background: #cdcdcd; margin: 0 auto 0 1px; }
.actions { height: 33px; flex: none; display: flex; justify-content: flex-end; gap: 8px; padding-right: 4px; }
.actions .i16 { height: 16px; }
.prop { height: 19px; flex: none; display: flex; align-items: center; gap: 4px; padding-left: 1px; }
.prop label { width: 45px; }
.prop .field { flex: 1; }
.params { height: 16px; margin: 1px 1px 7px; flex: none; }

.idbar { height: 18px; flex: none; border-top: 1px solid #ddd; display: flex; justify-content: flex-end; align-items: center; gap: 16px; padding-right: 30px; }
.brand { font: 11px/14px Lato, "Open Sans", sans-serif; color: #888; }
.brand span { color: #bbb; }

.taskbar { height: 31px; flex: none; display: flex; background: #2e2a2b; background: linear-gradient(90deg, #29262a, #382d2b 20%, #362d2c 45%, #2b2a2c 60%, #2a292b 80%, #352c2c); color: #fff; }
.taskbar > button { width: 39px; }
.taskbar > button > svg { width: 20px; height: 20px; }
.taskbar > .al { margin-left: 5px; }
.taskbar > .ed { margin-left: 7px; }
.run { background: linear-gradient(#a8a8a8, #a8a8a8) 50% 100% / 31px 1px no-repeat; }
.run.cur { background: #55504f; border-bottom: 1px solid #ccc; }
.ya { font: 700 15px "Liberation Sans", Arial, sans-serif; stroke: none; }
.tray { margin-left: auto; display: flex; align-items: center; gap: 6px; padding-right: 19px; }
.tray svg { stroke: #eee; }
.lang { font-size: 10px; padding: 0 2px; }
.clock { text-align: center; line-height: 14px; padding: 0 7px 0 0; }
```
